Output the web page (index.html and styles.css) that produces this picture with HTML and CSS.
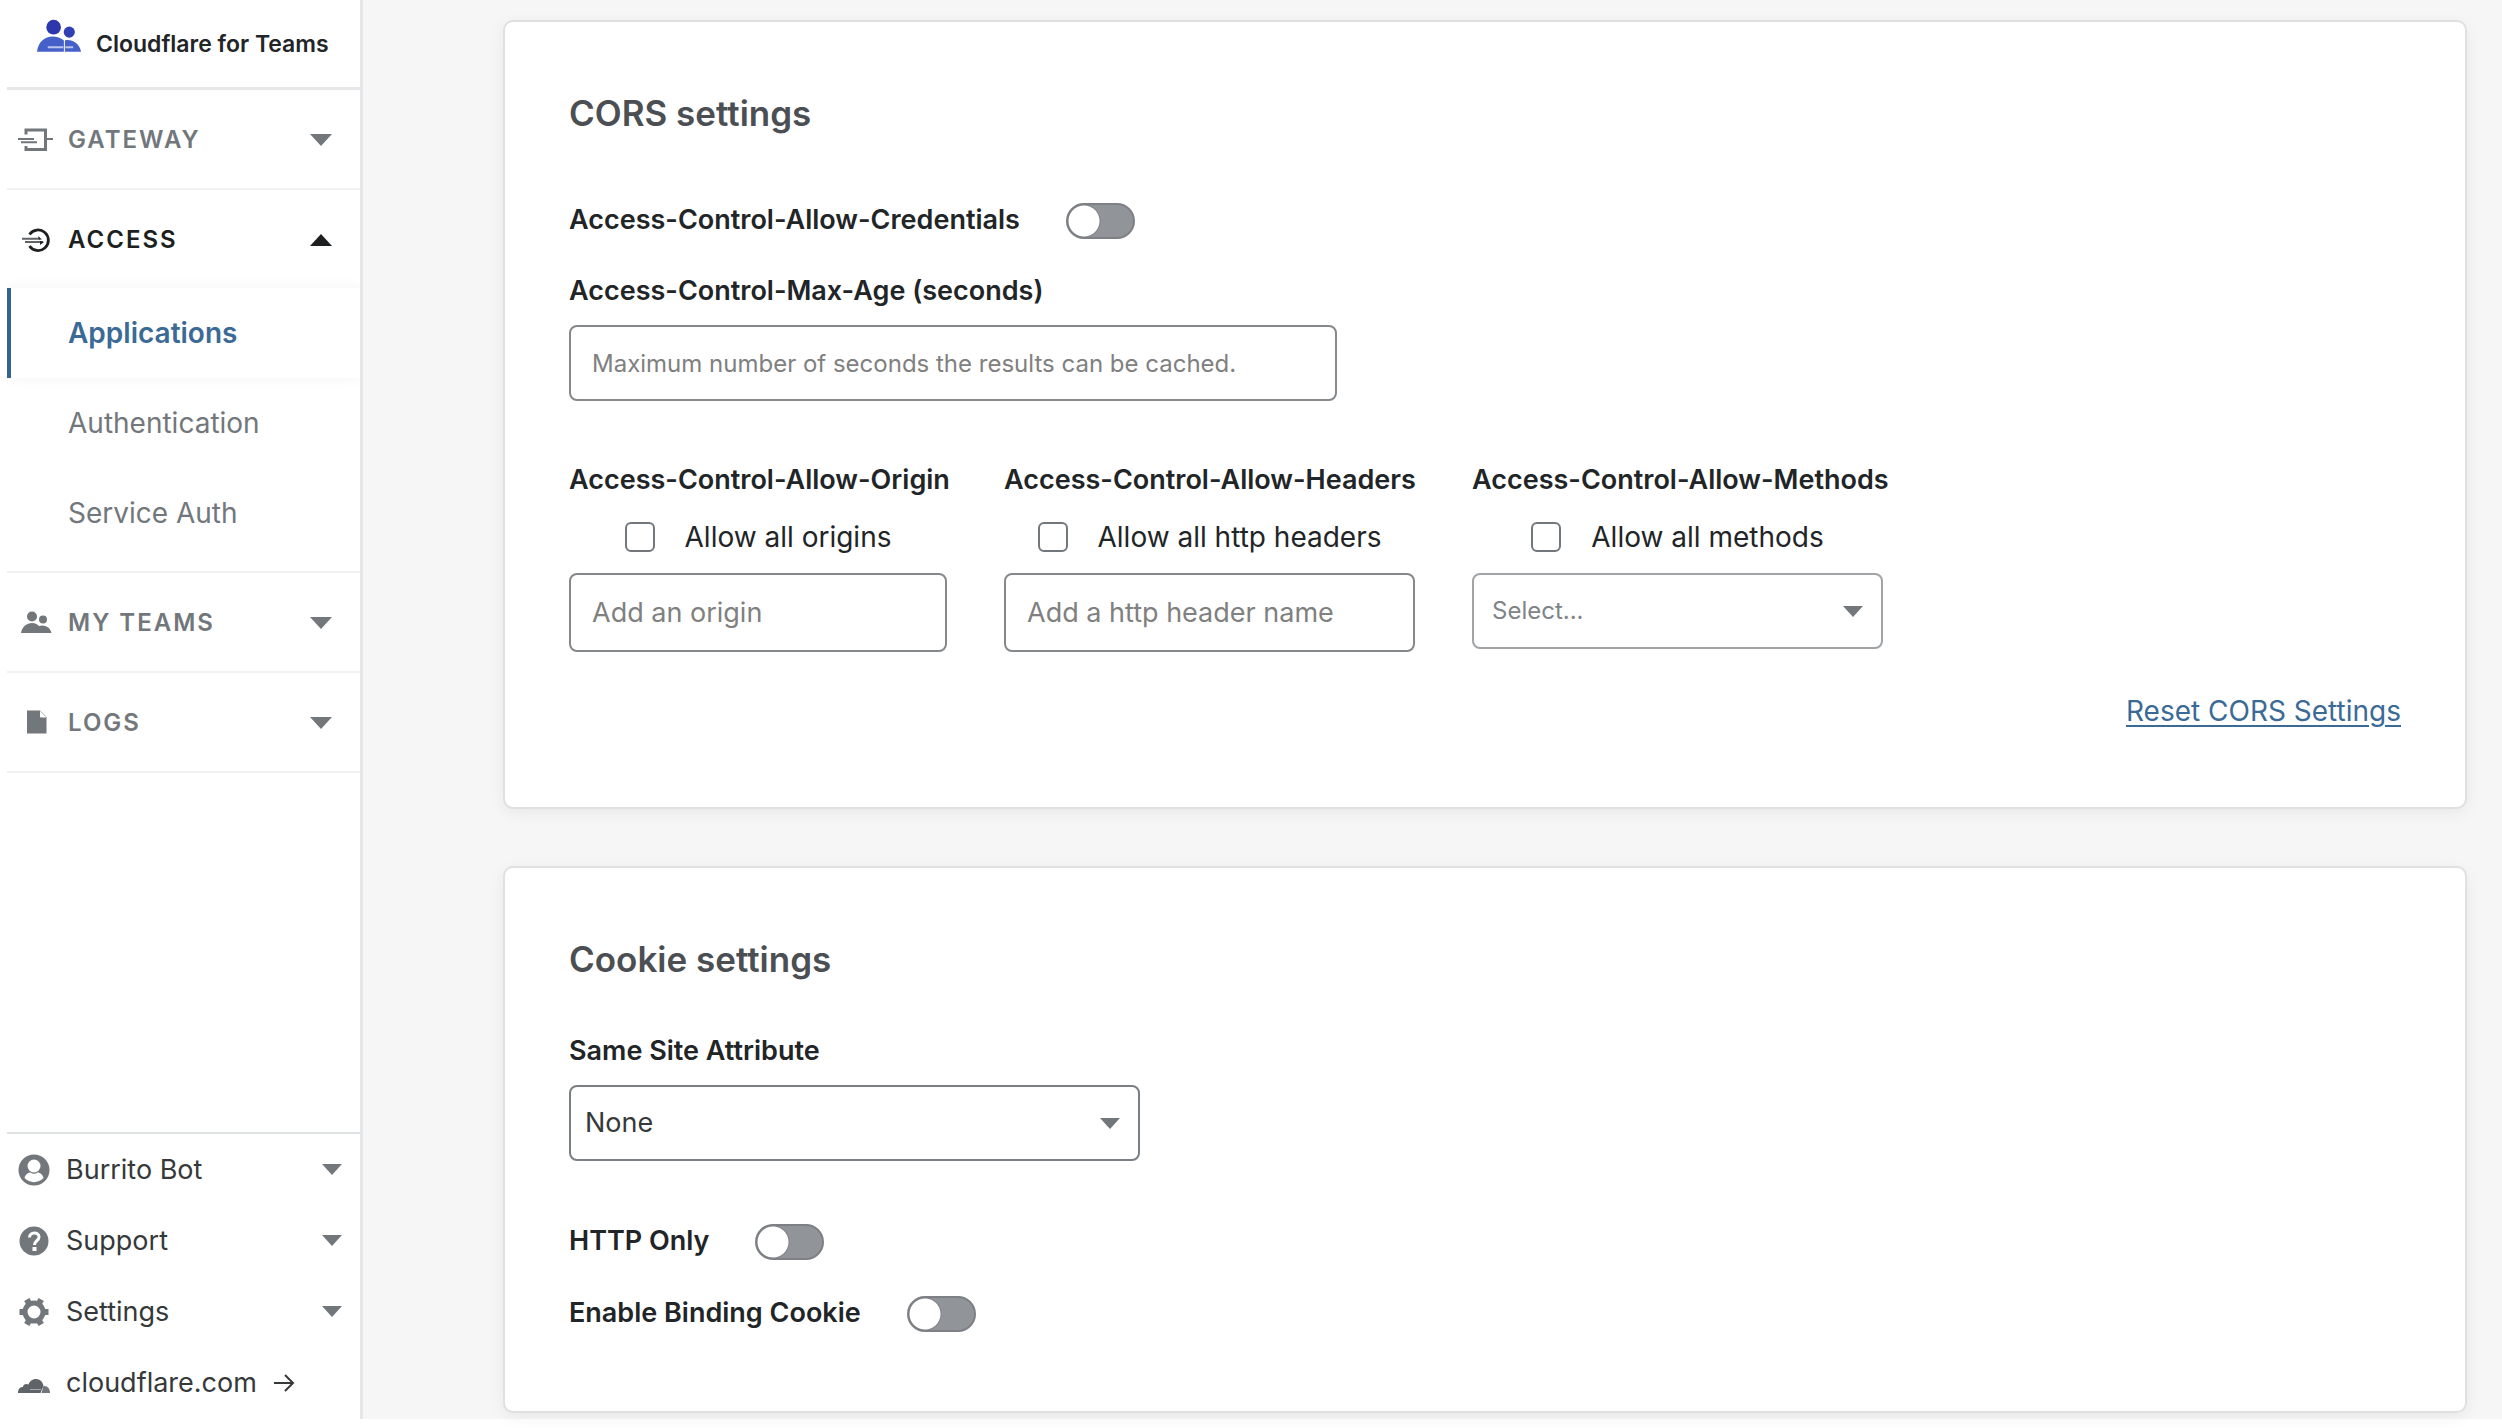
FILE: index.html
```html
<!DOCTYPE html>
<html lang="en">
<head>
<meta charset="utf-8">
<meta name="viewport" content="width=device-width, initial-scale=1">
<title>Cloudflare for Teams</title>
<link rel="stylesheet" href="styles.css">
</head>
<body>
<div class="app">
  <aside class="sidebar">
    <a class="brand" href="#">
      <svg class="brand-logo" viewBox="0 0 46 34" aria-hidden="true">
        <circle cx="17" cy="8" r="7.500" fill="#2d36ad"/>
        <circle cx="33" cy="13" r="5.700" fill="#3240b4"/>
        <path d="M0 33C1 23 8 17.500 16 17.500c4.500 0 8 1.500 11.500 4V33z" fill="#4560c8"/>
        <path d="M28.500 33V21.500c7-1.500 15 3 16.500 11.500z" fill="#4560c8"/>
        <path d="M11 28.500h16M29 28.500h8" stroke="#b9c5ef" stroke-width="2"/>
      </svg>
      <span class="brand-name">Cloudflare for Teams</span>
    </a>
    <nav class="nav" aria-label="Main">
      <div class="nav-group">
        <button class="nav-toggle" type="button" aria-expanded="false">
          <svg class="nav-icon" viewBox="0 0 36 28" aria-hidden="true" fill="none" stroke="currentColor">
            <path d="M8 8.500V4h19.500v19.500H8V20" stroke-width="3"/>
            <path d="M28 13h7M0 13h16M3 16.200h16" stroke-width="2"/>
          </svg>
          <span class="nav-label">GATEWAY</span>
          <svg class="caret" viewBox="0 0 22 12" aria-hidden="true"><path d="M0 0h22L11 12z" fill="currentColor"/></svg>
        </button>
      </div>
      <div class="nav-group">
        <button class="nav-toggle nav-toggle-open" type="button" aria-expanded="true">
          <svg class="nav-icon" viewBox="0 0 36 28" aria-hidden="true" fill="none" stroke="currentColor">
            <path d="M11.500 8.500A10.300 10.300 0 1 1 11.500 20" stroke-width="2.800"/>
            <path d="M4 12.800h18M7 16h18" stroke-width="2" stroke="#5f6367"/>
            <path d="M20 10l4 3.500h-3zM22 19l4-3-4-1z" fill="currentColor" stroke="none"/>
          </svg>
          <span class="nav-label">ACCESS</span>
          <svg class="caret" viewBox="0 0 22 12" aria-hidden="true"><path d="M0 12h22L11 0z" fill="currentColor"/></svg>
        </button>
        <ul class="nav-items">
          <li><a class="nav-item nav-item-active" href="#" aria-current="page">Applications</a></li>
          <li><a class="nav-item" href="#">Authentication</a></li>
          <li><a class="nav-item" href="#">Service Auth</a></li>
        </ul>
      </div>
      <div class="nav-group">
        <button class="nav-toggle" type="button" aria-expanded="false">
          <svg class="nav-icon" viewBox="0 0 36 28" aria-hidden="true" fill="currentColor">
            <circle cx="14" cy="7.500" r="5"/><circle cx="25" cy="10.500" r="4"/>
            <path d="M3 24C4 17.500 9 14 14 14c3 0 5 1 7 3 5-2 11.500 1 12.500 7z"/>
          </svg>
          <span class="nav-label">MY TEAMS</span>
          <svg class="caret" viewBox="0 0 22 12" aria-hidden="true"><path d="M0 0h22L11 12z" fill="currentColor"/></svg>
        </button>
      </div>
      <div class="nav-group">
        <button class="nav-toggle" type="button" aria-expanded="false">
          <svg class="nav-icon" viewBox="0 0 36 28" aria-hidden="true">
            <path d="M9 1.500h13l6.500 6.500v16.500H9z" fill="currentColor"/>
            <path d="M22.500 2.500v5.500H28" fill="#fff" stroke="#fff"/>
          </svg>
          <span class="nav-label">LOGS</span>
          <svg class="caret" viewBox="0 0 22 12" aria-hidden="true"><path d="M0 0h22L11 12z" fill="currentColor"/></svg>
        </button>
      </div>
    </nav>
    <div class="account">
      <button class="account-row" type="button">
        <svg class="account-icon" viewBox="0 0 32 32" aria-hidden="true">
          <circle cx="16" cy="16" r="15.500" fill="currentColor"/>
          <circle cx="16" cy="12" r="6.500" fill="#fff"/>
          <path d="M6.500 24c1-4 4-5.500 6-5.500 2 1.600 5 1.600 7 0 2 0 5 1.500 6 5.500-5 5.500-14 5.500-19 0z" fill="#fff"/>
        </svg>
        <span class="account-label">Burrito Bot</span>
        <svg class="caret caret-small" viewBox="0 0 22 12" aria-hidden="true"><path d="M0 0h22L11 12z" fill="currentColor"/></svg>
      </button>
      <button class="account-row" type="button">
        <svg class="account-icon" viewBox="0 0 32 32" aria-hidden="true">
          <circle cx="16" cy="16" r="14.500" fill="currentColor"/>
          <path d="M11.500 12.500c0-6 9.500-6 9.500-.5 0 4-4.500 3.500-4.500 8" fill="none" stroke="#fff" stroke-width="3"/>
          <rect x="14.500" y="22" width="4" height="4" fill="#fff"/>
        </svg>
        <span class="account-label">Support</span>
        <svg class="caret caret-small" viewBox="0 0 22 12" aria-hidden="true"><path d="M0 0h22L11 12z" fill="currentColor"/></svg>
      </button>
      <button class="account-row" type="button">
        <svg class="account-icon" viewBox="0 0 32 32" aria-hidden="true" fill="none" stroke="currentColor">
          <circle cx="16" cy="16" r="9" stroke-width="5"/>
          <path d="M1.500 16h4M26.500 16h4M8.800 3.500l2 3.500M21.200 25l2 3.500M23.200 3.500l-2 3.500M10.800 25l-2 3.500" stroke-width="6"/>
        </svg>
        <span class="account-label">Settings</span>
        <svg class="caret caret-small" viewBox="0 0 22 12" aria-hidden="true"><path d="M0 0h22L11 12z" fill="currentColor"/></svg>
      </button>
      <a class="account-row" href="#">
        <svg class="account-icon" viewBox="0 0 32 32" aria-hidden="true">
          <path d="M0 26c0-4 2-6 5-6 0-2.500 3-4 5.500-2.500C12 13.500 15 12 18 12c4 0 7 3 7.500 7l-3 7z" fill="#5f6468"/>
          <path d="M23.500 26l2-7c4-.5 6.500 2.500 6.500 7z" fill="#72777c"/>
          <path d="M12 22.500h11" stroke="#a9adb0" stroke-width="1"/>
        </svg>
        <span>cloudflare.com</span>
        <svg class="arrow" viewBox="0 0 22 20" aria-hidden="true"><path d="M1 10h19M12 2l8 8-8 8" fill="none" stroke="#36393a" stroke-width="2"/></svg>
      </a>
    </div>
  </aside>

  <main class="main">
    <section class="card" aria-labelledby="cors-title">
      <h2 class="card-title" id="cors-title">CORS settings</h2>
      <div class="switch-row">
        <label class="label" for="allow-credentials">Access-Control-Allow-Credentials</label>
        <input class="switch" id="allow-credentials" type="checkbox">
      </div>
      <div class="field field-age">
        <label class="label" for="max-age">Access-Control-Max-Age (seconds)</label>
        <input class="input input-age" id="max-age" type="text" placeholder="Maximum number of seconds the results can be cached.">
      </div>
      <div class="columns">
        <div class="column column-origin">
          <label class="label" for="origin">Access-Control-Allow-Origin</label>
          <label class="check"><input class="checkbox" type="checkbox">Allow all origins</label>
          <input class="input" id="origin" type="text" placeholder="Add an origin">
        </div>
        <div class="column">
          <label class="label" for="header">Access-Control-Allow-Headers</label>
          <label class="check"><input class="checkbox" type="checkbox">Allow all http headers</label>
          <input class="input" id="header" type="text" placeholder="Add a http header name">
        </div>
        <div class="column">
          <label class="label" for="methods">Access-Control-Allow-Methods</label>
          <label class="check"><input class="checkbox" type="checkbox">Allow all methods</label>
          <div class="select-wrap">
            <select class="select select-methods" id="methods"><option>Select...</option></select>
            <svg class="caret caret-select" viewBox="0 0 22 12" aria-hidden="true"><path d="M0 0h22L11 12z" fill="currentColor"/></svg>
          </div>
        </div>
      </div>
      <div class="card-actions"><a class="reset" href="#">Reset CORS Settings</a></div>
    </section>

    <section class="card" aria-labelledby="cookie-title">
      <h2 class="card-title card-title-tight" id="cookie-title">Cookie settings</h2>
      <div class="field field-site">
        <label class="label" for="same-site">Same Site Attribute</label>
        <div class="select-wrap select-wrap-site">
          <select class="select" id="same-site"><option>None</option></select>
          <svg class="caret caret-select" viewBox="0 0 22 12" aria-hidden="true"><path d="M0 0h22L11 12z" fill="currentColor"/></svg>
        </div>
      </div>
      <div class="switch-row">
        <label class="label" for="http-only">HTTP Only</label>
        <input class="switch" id="http-only" type="checkbox">
      </div>
      <div class="switch-row">
        <label class="label" for="binding-cookie">Enable Binding Cookie</label>
        <input class="switch" id="binding-cookie" type="checkbox">
      </div>
    </section>
  </main>
</div>
</body>
</html>
```
FILE: styles.css
```css
*,
*::before,
*::after {
  box-sizing: border-box;
}

body {
  margin: 0;
  background: #fff;
  color: #222527;
  font-family: Inter, "Liberation Sans", sans-serif;
  font-size: 28px;
  line-height: 36px;
}

button,
input,
select {
  color: inherit;
  font: inherit;
}

.app {
  display: flex;
  min-height: 100vh;
  padding: 0 0 10px 7px;
}

/* Sidebar */
.sidebar {
  display: flex;
  flex: none;
  flex-direction: column;
  width: 356px;
  border-right: 3px solid #e5e7e8;
}

.brand {
  display: flex;
  align-items: flex-start;
  gap: 14px;
  height: 90px;
  padding: 19px 0 0 30px;
  border-bottom: 3px solid #e5e7e8;
  color: #222527;
  font-size: 23px;
  font-weight: 600;
  text-decoration: none;
  white-space: nowrap;
}

.brand-logo {
  flex: none;
  width: 45px;
  height: 34px;
}

.brand-name {
  padding-top: 7px;
}

.nav-group {
  border-bottom: 2px solid #f0f2f2;
}

.nav-toggle {
  display: flex;
  align-items: center;
  gap: 14px;
  width: 100%;
  height: 98px;
  padding: 2px 28px 0 11px;
  border: 0;
  background: none;
  color: #72777c;
  text-align: left;
}

.nav-toggle-open {
  color: #1d1f20;
}

.nav-icon {
  flex: none;
  width: 36px;
  height: 28px;
}

.nav-label {
  flex: 1;
  font-size: 24px;
  font-weight: 600;
  letter-spacing: 2px;
}

.caret {
  flex: none;
  width: 22px;
  height: 12px;
  color: #72777c;
}

.nav-toggle-open .caret {
  color: #1d1f20;
}

.nav-items {
  margin: 0;
  padding: 0 0 13px;
  list-style: none;
}

.nav-item {
  display: flex;
  align-items: center;
  height: 90px;
  padding-left: 61px;
  color: #72777c;
  text-decoration: none;
}

.nav-item-active {
  padding-left: 57px;
  border-left: 4px solid #35638f;
  box-shadow: 0 0 14px rgba(0, 0, 0, 0.05);
  clip-path: inset(-14px 0 -14px 0);
  color: #3b6a96;
  font-weight: 600;
}

.account {
  margin-top: auto;
  padding-bottom: 1px;
  border-top: 2px solid #e0e3e4;
}

.account-row {
  display: flex;
  align-items: center;
  gap: 16px;
  width: 100%;
  height: 71px;
  padding: 0 18px 0 11px;
  border: 0;
  background: none;
  color: #36393a;
  font-size: 27px;
  text-align: left;
  text-decoration: none;
}

.account-icon {
  flex: none;
  width: 32px;
  height: 32px;
  color: #72777c;
}

.account-label {
  flex: 1;
}

.caret-small {
  width: 20px;
  height: 11px;
}

.arrow {
  width: 22px;
  height: 20px;
}

/* Main */
.main {
  display: flex;
  flex: 1;
  flex-direction: column;
  gap: 57px;
  min-width: 0;
  padding: 20px 35px 6px 140px;
  background: #f6f6f6;
}

.card {
  padding: 69px 64px 78px;
  border: 2px solid #dee0e1;
  border-radius: 10px;
  background: #fff;
  box-shadow: 0 4px 16px rgba(0, 0, 0, 0.06);
}

.card-title {
  margin: 0 0 67px;
  color: #4b4f53;
  font-size: 35px;
  font-weight: 600;
  line-height: 44px;
}

.card-title-tight {
  margin-bottom: 52px;
}

.label {
  font-size: 27px;
  font-weight: 600;
  white-space: nowrap;
}

.switch-row {
  display: flex;
  align-items: center;
  gap: 46px;
}

.switch-row .label {
  padding-bottom: 2px;
}

.switch-row + .switch-row {
  margin-top: 34px;
}

.switch {
  flex: none;
  width: 69px;
  height: 36px;
  margin: 0;
  border: 2px solid #7d8185;
  border-radius: 18px;
  background: radial-gradient(circle at 16px 16px, #fff 15px, #7d8185 16px, #919599 17px);
  appearance: none;
}

.field {
  display: flex;
  flex-direction: column;
  align-items: flex-start;
  gap: 16px;
}

.field-age {
  margin: 33px 0 61px;
}

.field-site {
  margin-bottom: 62px;
}

.input {
  width: 100%;
  height: 79px;
  padding: 0 21px;
  border: 2px solid #85898c;
  border-radius: 8px;
  background: #fff;
  font-size: 27px;
}

.input::placeholder {
  color: #808080;
  opacity: 1;
}

.input-age {
  width: 768px;
  height: 76px;
  font-size: 24px;
}

.columns {
  display: flex;
  gap: 57px;
}

.column {
  display: flex;
  flex-direction: column;
  width: 411px;
}

.column-origin {
  width: 378px;
}

.check {
  display: flex;
  align-items: center;
  justify-content: center;
  gap: 30px;
  margin: 21px 0 18px;
  white-space: nowrap;
}

.checkbox {
  flex: none;
  width: 30px;
  height: 30px;
  margin: 0;
  border: 2px solid #72777c;
  border-radius: 6px;
  background: #fff;
  appearance: none;
}

.select-wrap {
  display: grid;
  align-items: center;
}

.select-wrap-site {
  width: 571px;
}

.select {
  grid-area: 1 / 1;
  width: 100%;
  height: 76px;
  padding: 0 14px;
  border: 2px solid #7a7f83;
  border-radius: 8px;
  background: #fff;
  color: #36393a;
  font-size: 27px;
  appearance: none;
}

.select-methods {
  padding-left: 18px;
  border-color: #a0a4a7;
  color: #808487;
  font-size: 24px;
}

.caret-select {
  grid-area: 1 / 1;
  justify-self: end;
  width: 20px;
  height: 11px;
  margin-right: 20px;
  pointer-events: none;
}

.card-actions {
  display: flex;
  justify-content: flex-end;
  margin-top: 41px;
}

.reset {
  color: #3b6a96;
  text-underline-offset: 4px;
}
```
